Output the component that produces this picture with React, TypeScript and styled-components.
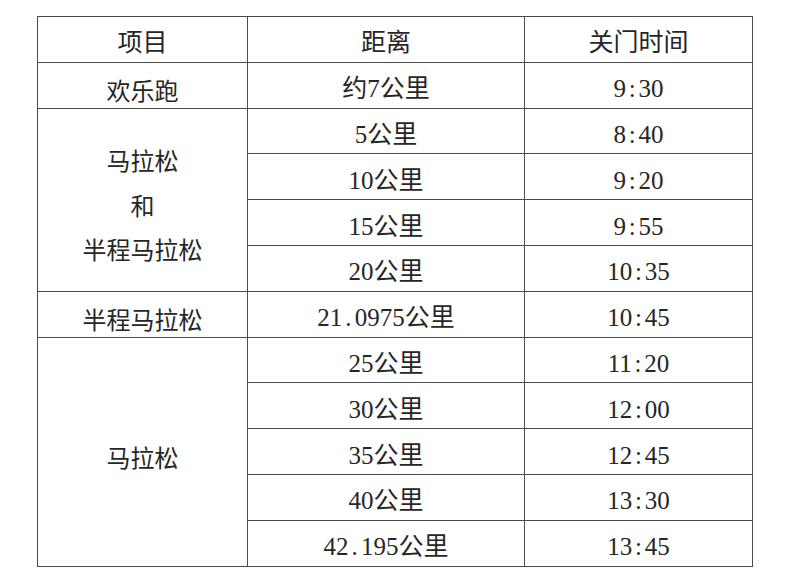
import React from "react";
import styled, { createGlobalStyle } from "styled-components";

type Row = { distance: string; time: string };

const groups: { name: string[]; rows: Row[] }[] = [
    { name: ["欢乐跑"], rows: [{ distance: "约7公里", time: "9:30" }] },
    {
        name: ["马拉松", "和", "半程马拉松"],
        rows: [
            { distance: "5公里", time: "8:40" },
            { distance: "10公里", time: "9:20" },
            { distance: "15公里", time: "9:55" },
            { distance: "20公里", time: "10:35" },
        ],
    },
    { name: ["半程马拉松"], rows: [{ distance: "21.0975公里", time: "10:45" }] },
    {
        name: ["马拉松"],
        rows: [
            { distance: "25公里", time: "11:20" },
            { distance: "30公里", time: "12:00" },
            { distance: "35公里", time: "12:45" },
            { distance: "40公里", time: "13:30" },
            { distance: "42.195公里", time: "13:45" },
        ],
    },
];

// SimSun-style half-width punctuation: "." and ":" take half an em like the digits
function Mixed({ text }: { text: string }) {
    return (
        <>
            {text.split(/([.:])/).map((part, i) =>
                part === "." || part === ":" ? <Punct key={i}>{part}</Punct> : <span key={i}>{part}</span>
            )}
        </>
    );
}

export default function App() {
    return (
        <>
            <GlobalStyle />
            <Page>
                <Table>
                    <colgroup>
                        <col style={{ width: 210 }} />
                        <col style={{ width: 277 }} />
                        <col style={{ width: 228 }} />
                    </colgroup>
                    <thead>
                        <tr>
                            <Cell as="th">项目</Cell>
                            <Cell as="th">距离</Cell>
                            <Cell as="th">关门时间</Cell>
                        </tr>
                    </thead>
                    <tbody>
                        {groups.map((g) =>
                            g.rows.map((r, i) => (
                                <tr key={g.name.join() + r.distance}>
                                    {i === 0 && (
                                        <NameCell rowSpan={g.rows.length}>
                                            {g.name.map((line) => (
                                                <NameLine key={line}>{line}</NameLine>
                                            ))}
                                        </NameCell>
                                    )}
                                    <Cell>
                                        <Mixed text={r.distance} />
                                    </Cell>
                                    <Cell>
                                        <Mixed text={r.time} />
                                    </Cell>
                                </tr>
                            ))
                        )}
                    </tbody>
                </Table>
            </Page>
        </>
    );
}

const GlobalStyle = createGlobalStyle`
    html, body {
        margin: 0;
        background: #ffffff;
    }
`;

const Page = styled.div`
    width: 800px;
    height: 586px;
    padding: 16px 0 0 37px;
    box-sizing: border-box;
    background: #ffffff;
`;

const Table = styled.table`
    width: 715px;
    table-layout: fixed;
    border-collapse: collapse;
    border: 1px solid #8a8a8a;
    font-family: "Liberation Serif", "Noto Sans CJK SC", serif;
    font-size: 25px;
    color: #262626;

    tr {
        height: 45.8px;
    }
`;

const Cell = styled.td`
    border: 1px solid #4a4a4a;
    padding: 8px 0 0 0;
    text-align: center;
    vertical-align: middle;
    font-weight: 400;
    line-height: 28px;
    white-space: nowrap;
`;

const NameCell = styled(Cell)`
    font-family: "Noto Sans CJK SC", sans-serif;
    font-size: 24px;
    padding-top: 10px;
`;

const NameLine = styled.div`
    line-height: 28px;

    & + & {
        margin-top: 16.5px;
    }
`;

const Punct = styled.span`
    display: inline-block;
    width: 0.5em;
    text-align: center;
`;
